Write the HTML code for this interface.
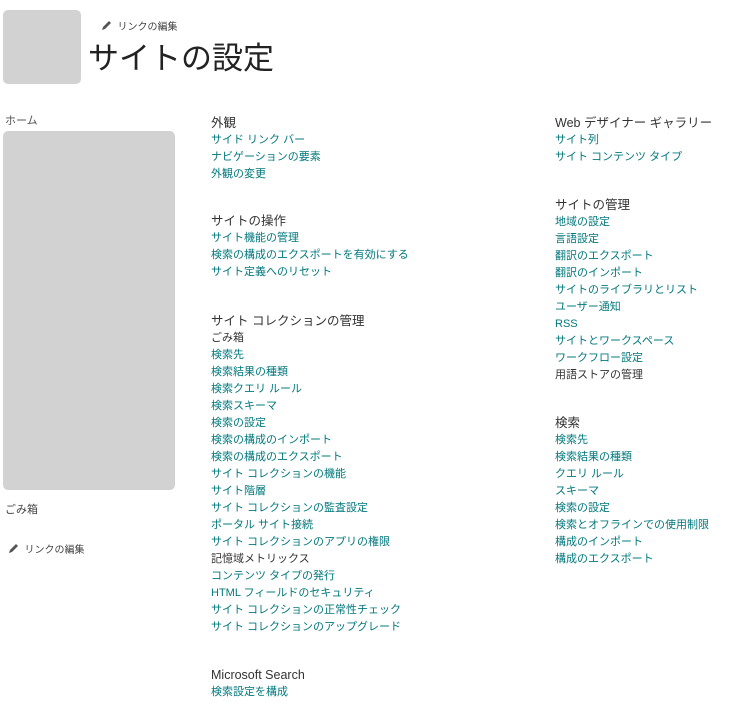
<!DOCTYPE html>
<html><head><meta charset="utf-8"><style>
body{margin:0;width:739px;height:715px;background:#fff;font-family:"Liberation Sans","Noto Sans CJK JP",sans-serif;position:relative;overflow:hidden}
.a{position:absolute}
.box{background:#d2d2d2;border-radius:5px}
.blk{position:absolute;font-size:11px;line-height:17px;color:#03787c;white-space:nowrap}
.blk h{display:block;font-size:12.5px;line-height:18px;color:#333}
.k{color:#333}
.ed{font-size:10px;color:#444}
</style></head><body>
<div class="a box" style="left:3px;top:10px;width:78px;height:74px"></div>
<div class="a ed" style="left:101px;top:18px"><svg width="11" height="11" viewBox="0 0 11 11" style="vertical-align:-1px"><path d="M1 10 L2 7 L8 1 L10 3 L4 9 Z" fill="#555"/></svg> &nbsp;リンクの編集</div>
<div class="a" style="left:88px;top:37px;font-size:31px;line-height:44px;color:#222">サイトの設定</div>
<div class="a" style="left:5px;top:112px;font-size:11px;color:#555">ホーム</div>
<div class="a box" style="left:3px;top:131px;width:172px;height:359px"></div>
<div class="a" style="left:5px;top:501px;font-size:11px;color:#444">ごみ箱</div>
<div class="a ed" style="left:8px;top:541px"><svg width="11" height="11" viewBox="0 0 11 11" style="vertical-align:-1px"><path d="M1 10 L2 7 L8 1 L10 3 L4 9 Z" fill="#555"/></svg> &nbsp;リンクの編集</div>

<div class="blk" style="left:211px;top:114px"><h>外観</h>サイド リンク バー<br>ナビゲーションの要素<br>外観の変更</div>
<div class="blk" style="left:211px;top:212px"><h>サイトの操作</h>サイト機能の管理<br>検索の構成のエクスポートを有効にする<br>サイト定義へのリセット</div>
<div class="blk" style="left:211px;top:312px"><h>サイト コレクションの管理</h><span class="k">ごみ箱</span><br>検索先<br>検索結果の種類<br>検索クエリ ルール<br>検索スキーマ<br>検索の設定<br>検索の構成のインポート<br>検索の構成のエクスポート<br>サイト コレクションの機能<br>サイト階層<br>サイト コレクションの監査設定<br>ポータル サイト接続<br>サイト コレクションのアプリの権限<br><span class="k">記憶域メトリックス</span><br>コンテンツ タイプの発行<br>HTML フィールドのセキュリティ<br>サイト コレクションの正常性チェック<br>サイト コレクションのアップグレード</div>
<div class="blk" style="left:211px;top:666px"><h>Microsoft Search</h>検索設定を構成</div>

<div class="blk" style="left:555px;top:114px"><h>Web デザイナー ギャラリー</h>サイト列<br>サイト コンテンツ タイプ</div>
<div class="blk" style="left:555px;top:196px"><h>サイトの管理</h>地域の設定<br>言語設定<br>翻訳のエクスポート<br>翻訳のインポート<br>サイトのライブラリとリスト<br>ユーザー通知<br>RSS<br>サイトとワークスペース<br>ワークフロー設定<br><span class="k">用語ストアの管理</span></div>
<div class="blk" style="left:555px;top:414px"><h>検索</h>検索先<br>検索結果の種類<br>クエリ ルール<br>スキーマ<br>検索の設定<br>検索とオフラインでの使用制限<br>構成のインポート<br>構成のエクスポート</div>
</body></html>
